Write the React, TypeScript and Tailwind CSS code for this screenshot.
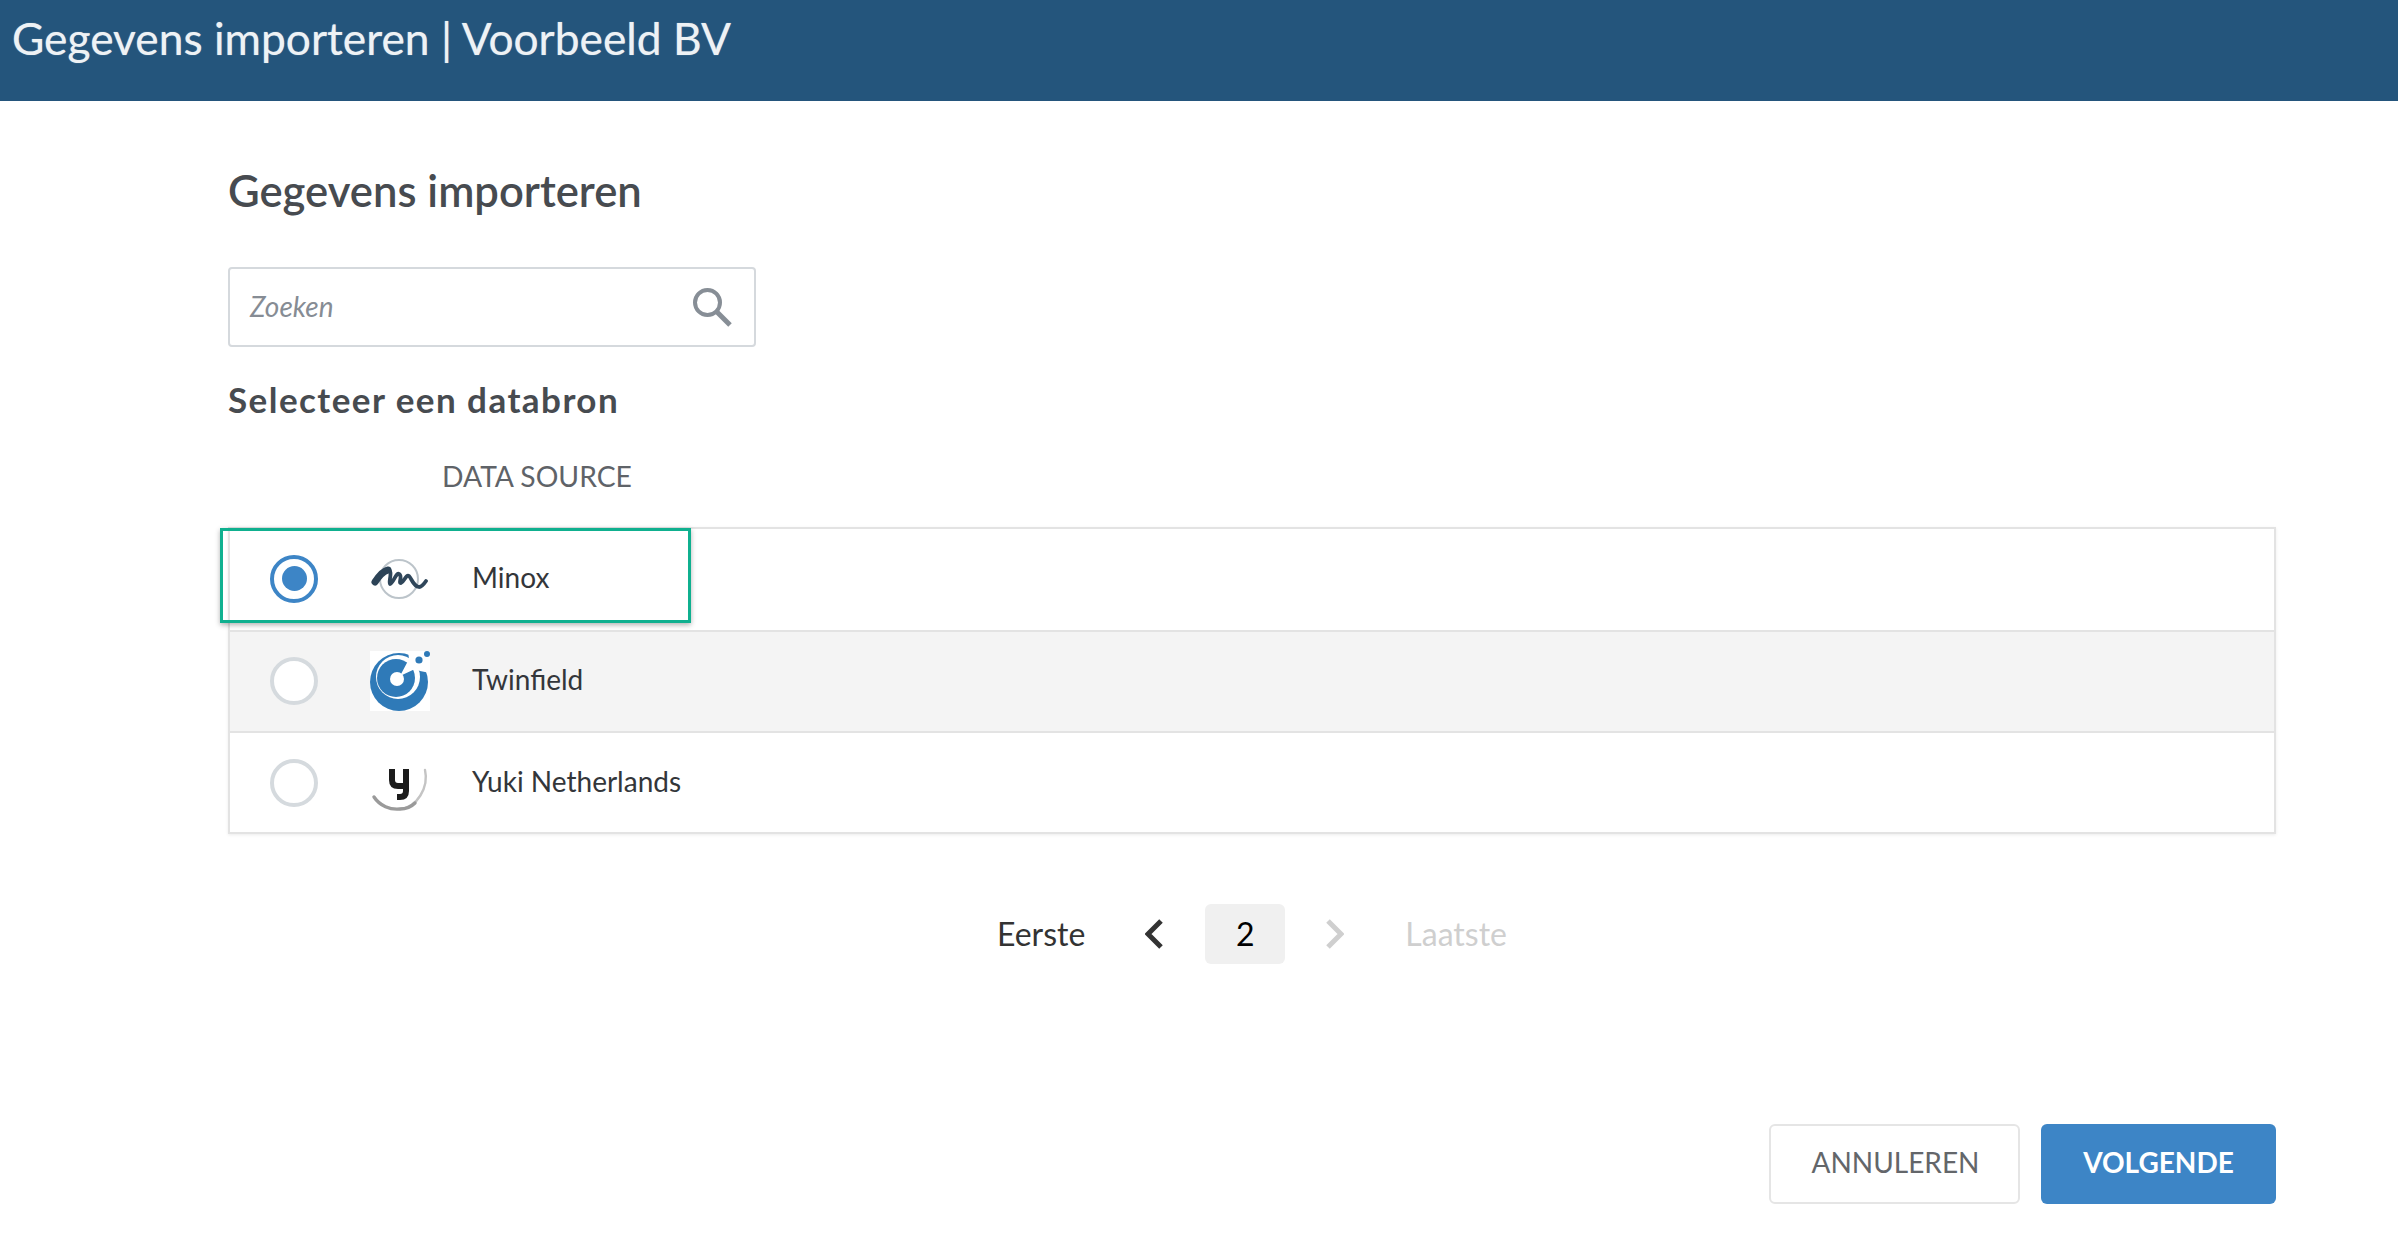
import React from 'react';

const MinoxLogo = () => (
  <svg viewBox="0 0 60 60" className="w-[60px] h-[60px] blur-[0.6px]">
    <circle cx="29" cy="30" r="19" fill="none" stroke="#bcc4ca" strokeWidth="2" />
    <path d="M17 20 C24 21 18 33 20 35 C23 35 26 23 29 25 C33 27 28 34 31 34 C34 33 36 25 39 27 C42 30 43 37 49 38 C52 38 54 35 56 32" fill="none" stroke="#2f465a" strokeWidth="3.8" strokeLinecap="round" strokeLinejoin="round" />
    <path d="M5 33 C9 27 13 22 18 21" fill="none" stroke="#2c4357" strokeWidth="7" strokeLinecap="round" />
  </svg>
);

const TwinfieldLogo = () => (
  <svg viewBox="0 0 60 60" className="w-[60px] h-[60px] bg-white">
    <circle cx="29" cy="31" r="29" fill="#2f7ab8" />
    <circle cx="28" cy="26" r="22" fill="#ffffff" />
    <circle cx="26" cy="27" r="19" fill="#2f7ab8" />
    <circle cx="27" cy="28" r="7" fill="#ffffff" />
    <path d="M30 25 L39 8 L38 0 L60 0 L60 22 L50 20 L45 18 Z" fill="#ffffff" />
    <circle cx="49" cy="9" r="3.6" fill="#2f7ab8" />
    <circle cx="57" cy="3" r="3" fill="#2f7ab8" />
  </svg>
);

const YukiLogo = () => (
  <svg viewBox="0 0 60 60" className="w-[60px] h-[60px] blur-[0.6px]">
    <path d="M55 17 C59 34 47 55 30 56" fill="none" stroke="#c4c4c4" strokeWidth="2.4" strokeLinecap="round" />
    <path d="M4 44 C10 53 20 57 30 56 C36 56 41 54 45 50" fill="none" stroke="#9a9a9a" strokeWidth="3.4" strokeLinecap="round" />
    <path d="M22 16 L22 27 C22 31 24 33 28 33 L36 33 M36 16 L36 38 C36 42 34 44 30 44 L27 44" fill="none" stroke="#1c1c1c" strokeWidth="6" />
  </svg>
);

const rows = [
  { name: 'Minox', Logo: MinoxLogo, selected: true, bg: 'bg-white' },
  { name: 'Twinfield', Logo: TwinfieldLogo, selected: false, bg: 'bg-[#f4f4f4]' },
  { name: 'Yuki Netherlands', Logo: YukiLogo, selected: false, bg: 'bg-white' },
];

export default function App() {
  return (
    <div className="min-h-[1248px] bg-white font-['Lato',sans-serif]">
      <header className="h-[101px] bg-[#24557c] pl-[12px] pt-[10px] text-[44.3px] leading-[56px] text-[#eef2f5] [text-shadow:0_0_1px_rgba(238,242,245,0.6)]">
        Gegevens importeren | Voorbeeld BV
      </header>

      <main className="pl-[228px] pr-[122px]">
        <h1 className="mt-[65px] text-[43.6px] leading-[48px] font-semibold text-[#474b50]">Gegevens importeren</h1>

        <div className="mt-[53px] flex h-[80px] w-[528px] items-center justify-between rounded-[4px] border-2 border-[#d5d9dd] pl-[20px] pr-[22px]">
          <span className="mb-[2px] text-[28px] italic text-[#868c94]">Zoeken</span>
          <svg viewBox="0 0 40 40" className="h-[40px] w-[40px]">
            <circle cx="15.5" cy="15.5" r="12.5" fill="none" stroke="#878e96" strokeWidth="4" />
            <path d="M24.5 24.5 L38 38" fill="none" stroke="#878e96" strokeWidth="5" />
          </svg>
        </div>

        <h2 className="mt-[32px] text-[35px] leading-[40px] font-bold tracking-[1.45px] text-[#474b50]">Selecteer een databron</h2>

        <div className="mt-[41px] pl-[214px] text-[28.3px] leading-[32px] text-[#5f6368]">DATA SOURCE</div>

        <div className="mt-[35px] border-2 border-[#e3e3e3] shadow-[0_1px_3px_rgba(0,0,0,0.08)]">
          {rows.map(({ name, Logo, selected, bg }, idx) => (
            <div key={name} className={`relative flex h-[101px] items-center pb-[2px] pl-[40px] last:pb-0 ${bg} ${idx > 0 ? 'border-t-2 border-[#e3e3e3]' : ''}`}>
              {selected ? (
                <span className="flex h-[48px] w-[48px] items-center justify-center rounded-full border-4 border-[#3d85c6] bg-white">
                  <span className="h-[25px] w-[25px] rounded-full bg-[#3d85c6]" />
                </span>
              ) : (
                <span className="h-[48px] w-[48px] rounded-full border-4 border-[#d5dade] bg-white" />
              )}
              <span className="ml-[52px]"><Logo /></span>
              <span className="mb-[3px] ml-[42px] text-[28px] text-[#33363a]">{name}</span>
              {selected && (
                <div className="absolute top-[-1px] left-[-10px] h-[95px] w-[471px] border-[3px] border-[#0fb08f] shadow-[0_2px_5px_rgba(0,0,0,0.3)]" />
              )}
            </div>
          ))}
        </div>

        <nav className="mt-[70px] flex h-[60px] items-center justify-center">
          <span className="text-[32px] text-[#333333]">Eerste</span>
          <svg viewBox="0 0 18 30" className="ml-[60px] h-[30px] w-[18px]">
            <path d="M16 2 L3 15 L16 28" fill="none" stroke="#333333" strokeWidth="5" />
          </svg>
          <span className="ml-[42px] flex h-[60px] w-[80px] items-center justify-center rounded-[6px] bg-[#f0f0f0] text-[32px] text-black">2</span>
          <svg viewBox="0 0 18 30" className="ml-[41px] h-[30px] w-[18px]">
            <path d="M2 2 L15 15 L2 28" fill="none" stroke="#cfcfcf" strokeWidth="5" />
          </svg>
          <span className="ml-[61px] text-[32px] text-[#cfcfcf]">Laatste</span>
        </nav>

        <div className="mt-[160px] flex justify-end gap-[21px]">
          <button className="h-[80px] w-[251px] rounded-[6px] border-2 border-[#e5e5e5] bg-white pb-[4px] pl-[2px] text-[28px] text-[#63666a]">ANNULEREN</button>
          <button className="h-[80px] w-[235px] rounded-[6px] bg-[#3d85c6] pb-[4px] text-[28px] font-bold text-white">VOLGENDE</button>
        </div>
      </main>
    </div>
  );
}
